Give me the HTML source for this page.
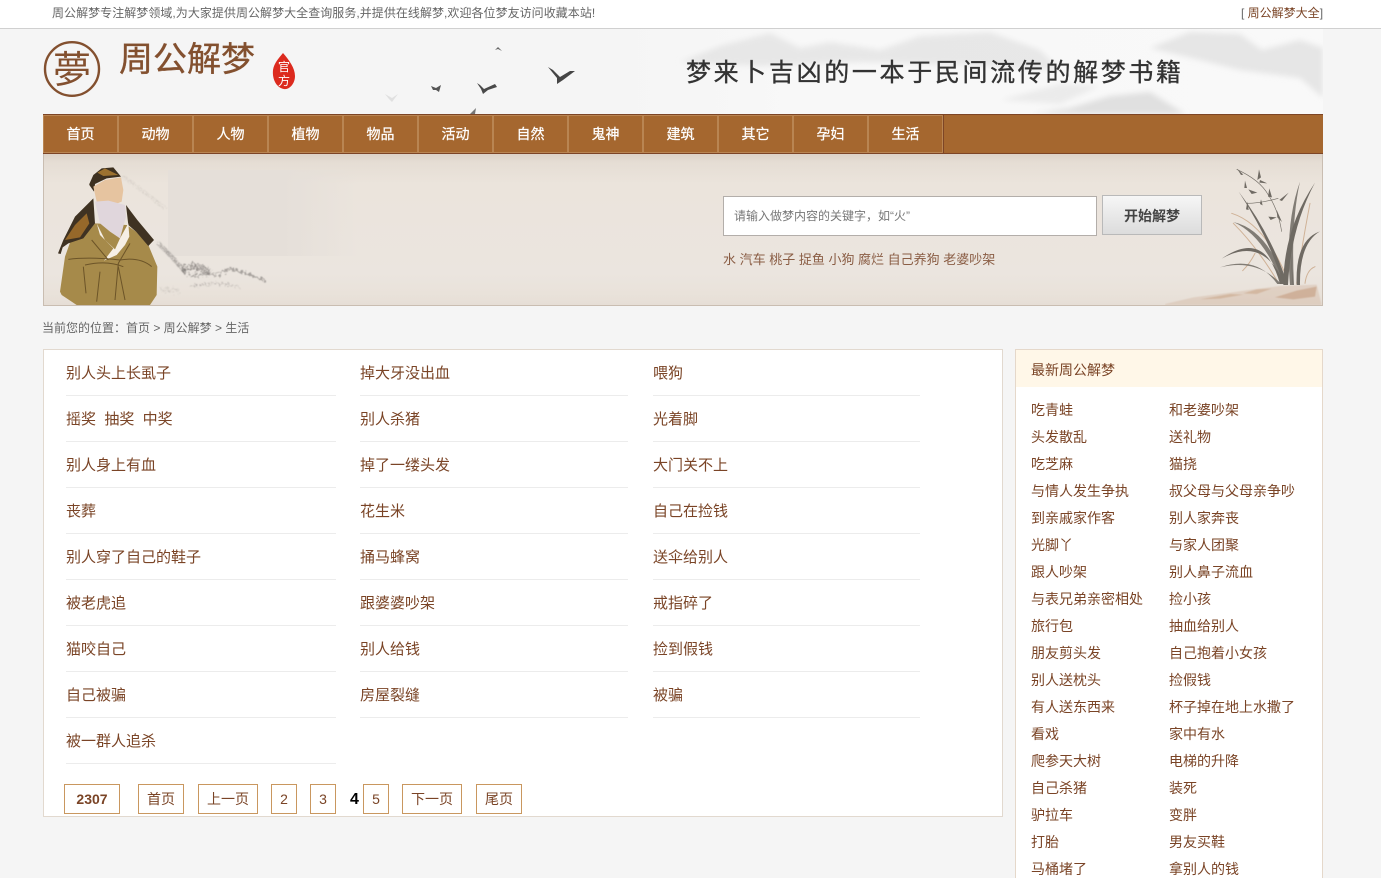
<!DOCTYPE html>
<html lang="zh">
<head>
<meta charset="utf-8">
<title>周公解梦</title>
<style>
*{margin:0;padding:0;box-sizing:border-box}
html,body{width:1381px;height:878px;overflow:hidden;background:#f5f5f5}
body{position:relative;font-family:"Liberation Sans","WenQuanYi Zen Hei","Noto Sans CJK SC",sans-serif;font-size:12px;color:#666}
.a{position:absolute;white-space:nowrap}
#top{left:0;top:0;width:1381px;height:29px;background:#fff;border-bottom:1px solid #d0d0d0}
#nav{left:43px;top:114px;width:1280px;height:40px;background:#a5672f;border-top:1px solid #7d4526;border-bottom:1px solid #7d4526;display:flex}
#nav span{display:block;width:75px;height:38px;line-height:37px;text-align:center;color:#fff;font-size:14px;border:1px solid #b98552;box-shadow:1px 0 0 #7d4526;-webkit-text-stroke:.25px #fff}
#banner{left:43px;top:154px;width:1280px;height:152px;border:1px solid #c9bdb1;border-top:0;background:linear-gradient(#dcd2c7 0,#e5ddd4 8px,#ebe4dc 30px,#ebe5df 120px,#e9e2da 140px,#e6ded6 151px);overflow:hidden}
#input{left:723px;top:196px;width:374px;height:40px;background:#fff;border:1px solid #b3aeaa;line-height:38px;padding-left:10px;color:#777;font-size:12px}
#btn{left:1102px;top:195px;width:100px;height:40px;border:1px solid #b9b9b9;background:linear-gradient(#f6f6f6,#dcdcdc);line-height:40px;text-align:center;color:#444;font-weight:bold;font-size:14px}
#hot{left:723px;top:251px;line-height:18px;font-size:13px;color:#8a5d44}
#crumb{left:42px;top:320px;line-height:16px;color:#666}
#main{left:43px;top:349px;width:960px;height:468px;background:#fff;border:1px solid #e2d9cf}
.col{position:absolute;top:0}
.col div{height:46px;line-height:45px;border-bottom:1px solid #ececec;font-size:15px;color:#7a4426;white-space:pre}
.col div span{position:relative;top:.5px}
.p{position:absolute;top:784px;height:30px;border:1px solid #c9975f;background:#fff;line-height:28px;text-align:center;font-size:14px;color:#7a4426}
#side{left:1015px;top:349px;width:308px;height:560px;background:#fff;border:1px solid #e5d8ca}
#side h3{height:37px;background:#fff7e8;font-weight:normal;font-size:14px;line-height:41px;padding-left:15px;color:#7a4426}
.s{position:absolute;top:47px;font-size:14px;color:#7a4426}
.s div{height:27px;line-height:27px;white-space:nowrap}
svg{position:absolute;display:block;overflow:hidden}
</style>
</head>
<body>
<div id="top" class="a"></div>
<div class="a" style="left:52px;top:5px;line-height:16px;color:#666;letter-spacing:.04px">周公解梦专注解梦领域,为大家提供周公解梦大全查询服务,并提供在线解梦,欢迎各位梦友访问收藏本站!</div>
<div class="a" style="left:1241px;top:5px;line-height:16px;color:#666">[ <span style="color:#7a4426">周公解梦大全</span>]</div>

<!-- header art -->
<svg style="left:43px;top:29px" width="1280" height="85" viewBox="43 29 1280 85">
<defs>
<filter id="b2"><feGaussianBlur stdDeviation="3"/></filter>
<filter id="b1"><feGaussianBlur stdDeviation="1.2"/></filter>
<filter id="b0"><feGaussianBlur stdDeviation=".35"/></filter>
<filter id="ink" x="-10%" y="-20%" width="120%" height="140%"><feTurbulence type="fractalNoise" baseFrequency=".12" numOctaves="2" seed="4"/><feDisplacementMap in="SourceGraphic" scale="34"/><feGaussianBlur stdDeviation="1.5"/></filter>
<linearGradient id="hg" x1="0" x2="1" y1="0" y2="0"><stop offset="0" stop-color="#f5f5f5"/><stop offset=".45" stop-color="#f5f5f5"/><stop offset=".6" stop-color="#f8f8f8"/><stop offset="1" stop-color="#f9f9f9"/></linearGradient>
</defs>
<rect x="43" y="29" width="1280" height="85" fill="url(#hg)"/>
<g filter="url(#b2)">
<path d="M680 62 L720 46 L770 33 L800 48 L830 42 L880 50 L920 36 L990 32 L1040 50 L1060 70 L980 66 L860 62 L760 66Z" fill="#dedede" opacity=".65"/>
<path d="M1150 48 L1190 32 L1240 34 L1262 50 L1300 40 L1323 48 L1323 98 L1300 78 L1240 70 L1200 60Z" fill="#d8d8d8" opacity=".6"/>
<path d="M1030 114 L1070 108 L1110 96 L1150 92 L1185 114Z" fill="#dadada" opacity=".8"/>
<path d="M1000 100 L1060 84 L1100 86 L1060 104Z" fill="#ebebeb"/>
</g>
<path d="M548 67 L553 70 L560 77 L570 71 L575 71 L563 80 L557 84 L557 78Z" fill="#444" filter="url(#b0)"/>
<path d="M477 83 L480 85 L484 89 L495 84 L497 87 L488 90 L483 94 L481 89Z" fill="#4a4a4a" filter="url(#b0)"/>
<path d="M431 86 L436 88 L441 85 L439 92 L436 90 L433 90Z" fill="#555"/>
<path d="M495 50 L498 47 L502 51 L498 49Z" fill="#666"/>
<path d="M385 94 L392 98 L398 94 L392 102 L389 99Z" fill="#e0e0e0"/>
<path d="M470 114 L474 110 L476 108 L475 114Z" fill="#777"/>
<!-- logo -->
<ellipse cx="72" cy="69" rx="27" ry="26.8" fill="none" stroke="#83502f" stroke-width="2.4"/>
<text x="72" y="83" text-anchor="middle" font-size="38" fill="#83502f" font-family="'Noto Sans CJK TC',sans-serif">夢</text>
<text x="119" y="71" font-size="34" fill="#83502f" stroke="#83502f" stroke-width=".35" font-family="'Noto Sans CJK SC',sans-serif">周公解梦</text>
<path d="M283 53 C289 60 295 68 295 76 C295 84 289 90 284 89 C277 88 272 80 273 70 C274 63 279 58 283 53Z" fill="#dc2a1e"/>
<text x="284" y="71" text-anchor="middle" font-size="12" fill="#fff" font-family="'Noto Sans CJK SC',sans-serif">官</text>
<text x="284" y="85" text-anchor="middle" font-size="12" fill="#fff" font-family="'Noto Sans CJK SC',sans-serif">方</text>
<text x="686" y="81" font-size="25" letter-spacing="2.65" fill="#333" stroke="#333" stroke-width=".35" font-family="'WenQuanYi Zen Hei','Noto Sans CJK SC',sans-serif">梦来卜吉凶的一本于民间流传的解梦书籍</text>
</svg>

<div id="nav" class="a"><span>首页</span><span>动物</span><span>人物</span><span>植物</span><span>物品</span><span>活动</span><span>自然</span><span>鬼神</span><span>建筑</span><span>其它</span><span>孕妇</span><span>生活</span></div>

<div id="banner" class="a"></div>
<div class="a" style="left:168px;top:170px;width:190px;height:86px;background:linear-gradient(90deg,#e5dfd9 0,#e5dfd9 60%,rgba(229,223,217,0) 100%)"></div>

<!-- ink landscape -->
<svg style="left:30px;top:150px" width="400" height="190" viewBox="0 0 1200 570">
<g filter="url(#ink)" fill="none" stroke="#6d6a66">
<path d="M280 80 L340 125 L405 175" stroke-width="12" stroke-dasharray="3 8" opacity=".22"/>
<path d="M385 280 L430 325 L470 372" stroke-width="13" stroke-dasharray="4 3" opacity=".55"/>
<path d="M455 358 L500 350 L540 365" stroke-width="20" stroke-dasharray="5 3" opacity=".7"/>
<path d="M480 378 L560 372 L600 355 L650 372 L705 390" stroke-width="6" opacity=".55"/>
<path d="M480 408 L560 400 L625 408" stroke-width="5" stroke-dasharray="6 3" opacity=".4"/>
<path d="M395 422 L445 420" stroke-width="10" stroke-dasharray="3 3" opacity=".22"/>
</g>
</svg>
<!-- scholar -->
<svg style="left:50px;top:160px" width="130" height="145" viewBox="0 0 390 435">
<path d="M30 395 L45 290 L60 248 L100 232 L135 190 L230 195 L258 215 L295 255 L322 320 L320 405 L300 435 L80 435 L35 405Z" fill="#a68a4a"/>
<path d="M24 280 L40 240 L75 170 L130 115 L135 190 L100 235 L55 250 L38 262 L32 282Z" fill="#3f3222"/>
<path d="M228 135 L262 180 L312 240 L295 258 L258 215 L235 195Z" fill="#3f3222"/>
<path d="M45 240 L75 195 L110 160 L118 190 L90 232Z" fill="#96682a"/>
<path d="M118 72 L130 45 L155 25 L190 22 L213 50 L170 55 L135 72 L132 95 L118 75Z" fill="#3d3020"/>
<path d="M142 38 L165 25 L205 45 L160 48Z" fill="#9b7130"/>
<path d="M130 80 L165 60 L213 52 L220 90 L215 125 L190 135 L140 125Z" fill="#e6c4a0"/>
<path d="M135 125 L175 122 L225 135 L228 170 L210 235 L180 215 L150 190Z" fill="#e0d6dc"/>
<path d="M140 190 L165 240 L195 268 L210 235 L235 190 L238 230 L225 255 L200 285 L162 302 L190 265 L150 225Z" fill="#f6efe6"/>
<g fill="none" stroke="#6c5428" stroke-width="3">
<path d="M55 298 Q120 290 210 300 Q270 290 305 320"/>
<path d="M105 315 Q170 300 220 320"/>
<path d="M125 240 L175 300 M240 250 L205 310 L195 420 M150 335 L140 425 M205 320 L225 420 M100 320 L108 400"/>
</g>
</svg>
<!-- orchid -->
<svg style="left:1165px;top:160px" width="157" height="145" viewBox="-105 0 471 435">
<g filter="url(#b1)" fill="#c9a78c">
<path d="M-105 432 L-20 412 L90 398 L160 388 L240 378 L350 374 L364 430 L364 435 L-105 435Z" opacity=".3"/>
<path d="M0 418 L90 402 L130 404 L60 416Z" opacity=".6"/>
<path d="M225 412 L290 392 L350 380 L345 410 L280 418Z" opacity=".75"/>
<path d="M130 400 L170 388 L215 386 L170 402Z" opacity=".6"/>
</g>
<g fill="none" stroke="#cfb196" stroke-width="3" stroke-linecap="round">
<path d="M290 370 Q305 260 330 130"/><path d="M255 340 Q190 190 95 160"/><path d="M230 360 Q170 260 100 190"/><path d="M165 280 Q150 310 128 332"/><path d="M315 370 Q320 330 345 320"/>
</g>
<g fill="#6f6a63">
<path d="M250 375 Q250 210 345 68 Q272 205 264 375Z"/>
<path d="M270 375 Q255 190 300 65 Q272 190 282 375Z" opacity=".85"/>
<path d="M250 372 Q205 230 116 95 Q215 225 262 372Z"/>
<path d="M246 372 Q190 225 100 186 Q205 210 256 372Z" opacity=".85"/>
<path d="M240 372 Q195 205 65 296 Q190 225 254 372Z"/>
<path d="M232 372 Q170 285 60 322 Q170 295 244 372Z" opacity=".85"/>
<path d="M290 375 Q285 240 360 214 Q298 250 300 375Z"/>
<path d="M280 375 L268 220 L278 375Z"/>
</g>
<g fill="none" stroke="#6f6a63" stroke-width="1.8"><path d="M110 28 Q180 60 205 105 Q235 150 245 215"/><path d="M140 130 Q180 130 235 115"/></g>
<g fill="#6f6a63">
<path d="M111 26 L130 44 L123 45Z"/><path d="M177 28 L172 60 L183 52Z"/><path d="M135 62 L141 84 L133 84Z"/><path d="M145 88 L172 98 L155 102Z"/><path d="M208 85 L216 112 L204 110Z"/><path d="M266 98 L238 120 L246 123Z"/><path d="M183 118 L188 136 L180 132Z"/><path d="M180 60 L202 70 L178 68Z"/><path d="M142 125 L146 150 L138 148Z"/><path d="M230 150 L246 186 L232 172Z"/><path d="M205 170 L230 172 L212 180Z"/>
</g>
</svg>

<div id="input" class="a">请输入做梦内容的关键字，如“火”</div>
<div id="btn" class="a">开始解梦</div>
<div id="hot" class="a">水 汽车 桃子 捉鱼 小狗 腐烂 自己养狗 老婆吵架</div>
<div id="crumb" class="a">当前您的位置：首页 &gt; 周公解梦 &gt; 生活</div>

<div id="main" class="a">
<div class="col" style="left:22px;width:270px">
<div><span>别人头上长虱子</span></div><div><span>摇奖  抽奖  中奖</span></div><div><span>别人身上有血</span></div><div><span>丧葬</span></div><div><span>别人穿了自己的鞋子</span></div><div><span>被老虎追</span></div><div><span>猫咬自己</span></div><div><span>自己被骗</span></div><div><span>被一群人追杀</span></div>
</div>
<div class="col" style="left:316px;width:268px">
<div><span>掉大牙没出血</span></div><div><span>别人杀猪</span></div><div><span>掉了一缕头发</span></div><div><span>花生米</span></div><div><span>捅马蜂窝</span></div><div><span>跟婆婆吵架</span></div><div><span>别人给钱</span></div><div><span>房屋裂缝</span></div>
</div>
<div class="col" style="left:609px;width:267px">
<div><span>喂狗</span></div><div><span>光着脚</span></div><div><span>大门关不上</span></div><div><span>自己在捡钱</span></div><div><span>送伞给别人</span></div><div><span>戒指碎了</span></div><div><span>捡到假钱</span></div><div><span>被骗</span></div>
</div>
</div>

<div class="p" style="left:64px;width:56px;font-weight:bold">2307</div>
<div class="p" style="left:138px;width:46px">首页</div>
<div class="p" style="left:198px;width:60px">上一页</div>
<div class="p" style="left:271px;width:26px">2</div>
<div class="p" style="left:310px;width:26px">3</div>
<div class="a" style="left:350px;top:790px;line-height:20px;font-size:16px;font-weight:bold;color:#000">4</div>
<div class="p" style="left:363px;width:26px">5</div>
<div class="p" style="left:402px;width:60px">下一页</div>
<div class="p" style="left:476px;width:46px">尾页</div>

<div id="side" class="a">
<h3>最新周公解梦</h3>
<div class="s" style="left:15px">
<div>吃青蛙</div><div>头发散乱</div><div>吃芝麻</div><div>与情人发生争执</div><div>到亲戚家作客</div><div>光脚丫</div><div>跟人吵架</div><div>与表兄弟亲密相处</div><div>旅行包</div><div>朋友剪头发</div><div>别人送枕头</div><div>有人送东西来</div><div>看戏</div><div>爬参天大树</div><div>自己杀猪</div><div>驴拉车</div><div>打胎</div><div>马桶堵了</div>
</div>
<div class="s" style="left:153px">
<div>和老婆吵架</div><div>送礼物</div><div>猫挠</div><div>叔父母与父母亲争吵</div><div>别人家奔丧</div><div>与家人团聚</div><div>别人鼻子流血</div><div>捡小孩</div><div>抽血给别人</div><div>自己抱着小女孩</div><div>捡假钱</div><div>杯子掉在地上水撒了</div><div>家中有水</div><div>电梯的升降</div><div>装死</div><div>变胖</div><div>男友买鞋</div><div>拿别人的钱</div>
</div>
</div>
</body>
</html>
